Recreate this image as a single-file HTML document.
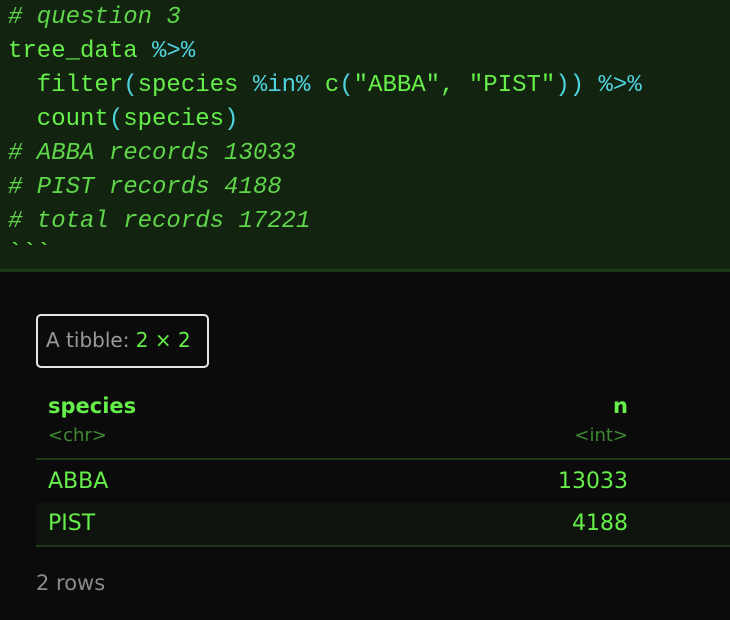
<!DOCTYPE html>
<html><head><style>
*{margin:0;padding:0;box-sizing:border-box}
body{width:730px;height:620px;background:#0b0b0b;position:relative;overflow:hidden}
#code{position:absolute;left:0;top:0;width:730px;height:272px;background:#12230f;border-bottom:3px solid #1d3a18}
.l{position:absolute;left:8px;font:24px/34px "Liberation Mono",monospace;color:#66ee4a;white-space:pre}
.c{font-style:italic;color:#5fd64a}
.o{color:#4fd3e0}
.s{position:absolute;font-family:"DejaVu Sans",sans-serif;white-space:pre}
.hr{position:absolute;left:36px;right:0;height:2px;background:#1f3a19}
</style></head><body>
<div id="code">
<div class="l c" style="top:1px"># question 3</div>
<div class="l" style="top:35px">tree_data <span class="o">%&gt;%</span></div>
<div class="l" style="top:69px">  filter<span class="o">(</span>species <span class="o">%in%</span> c<span class="o">(</span>"ABBA", "PIST"<span class="o">))</span> <span class="o">%&gt;%</span></div>
<div class="l" style="top:103px">  count<span class="o">(</span>species<span class="o">)</span></div>
<div class="l c" style="top:137px"># ABBA records 13033</div>
<div class="l c" style="top:171px"># PIST records 4188</div>
<div class="l c" style="top:205px"># total records 17221</div>
<div class="l" style="top:237px">&#96;&#96;&#96;</div>
</div>
<div style="position:absolute;left:36px;top:314px;width:173px;height:54px;border:2px solid #e6e6e6;border-radius:5px"></div>
<div class="s" style="left:46px;top:328px;font-size:20px;color:#9a9a9a">A tibble: <span style="color:#66ee4a">2 × 2</span></div>
<div class="s" style="left:48px;top:394px;font-size:21px;font-weight:bold;color:#66ee4a">species</div>
<div class="s" style="left:48px;top:425px;font-size:18px;color:#3f8a32">&lt;chr&gt;</div>
<div class="s" style="right:102px;top:394px;font-size:21px;font-weight:bold;color:#66ee4a">n</div>
<div class="s" style="right:102px;top:425px;font-size:18px;color:#3f8a32">&lt;int&gt;</div>
<div class="hr" style="top:458px"></div>
<div style="position:absolute;left:36px;right:0;top:503px;height:43px;background:#0f130e"></div>
<div class="s" style="left:48px;top:469px;font-size:22px;color:#66ee4a">ABBA</div>
<div class="s" style="right:102px;top:469px;font-size:22px;color:#66ee4a">13033</div>
<div class="s" style="left:48px;top:511px;font-size:22px;color:#66ee4a">PIST</div>
<div class="s" style="right:102px;top:511px;font-size:22px;color:#66ee4a">4188</div>
<div class="hr" style="top:545px"></div>
<div class="s" style="left:36px;top:571px;font-size:21px;color:#8a8a8a">2 rows</div>
</body></html>
